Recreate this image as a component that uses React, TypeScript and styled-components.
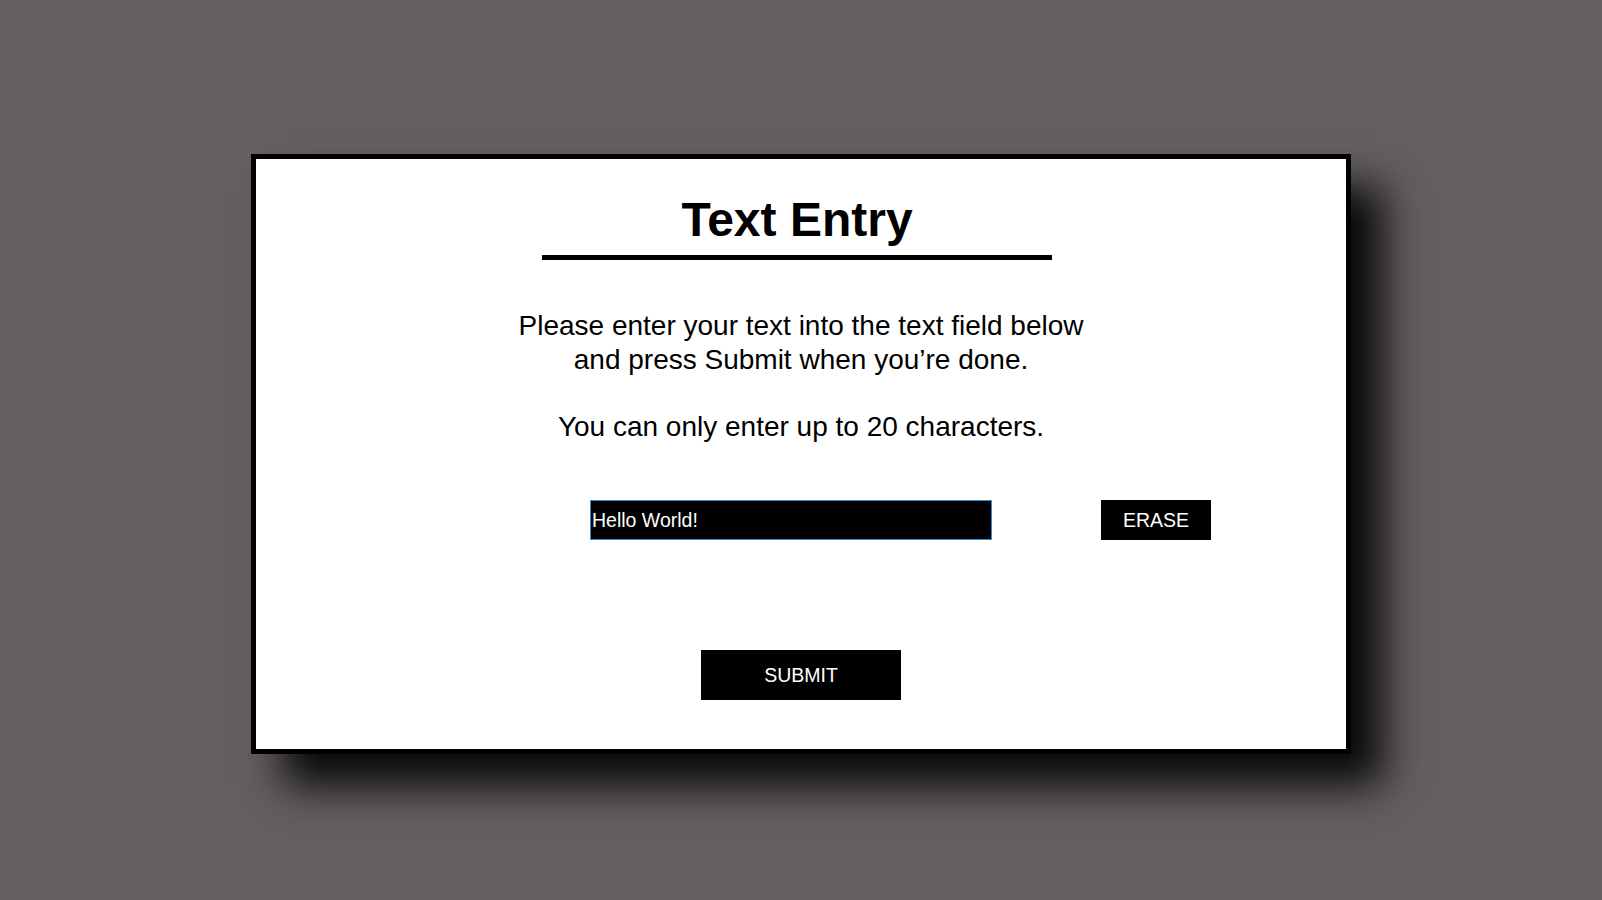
import { useState } from 'react';
import styled, { createGlobalStyle } from 'styled-components';

const GlobalStyle = createGlobalStyle`
  html,
  body {
    margin: 0;
    padding: 0;
    background-color: #65605f;
  }

  body {
    font-family: 'Liberation Sans', Arial, sans-serif;
  }
`;

const MAX_CHARS = 20;

export default function App() {
  const [text, setText] = useState('Hello World!');

  return (
    <>
      <GlobalStyle />
      <Page>
        <Card>
          <Heading>Text Entry</Heading>

          <Instructions>
            <p>
              Please enter your text into the text field below
              <br />
              and press Submit when you’re done.
            </p>
            <p>You can only enter up to {MAX_CHARS} characters.</p>
          </Instructions>

          <EntryRow>
            <TextField
              type='text'
              value={text}
              maxLength={MAX_CHARS}
              onChange={(e) => setText(e.target.value)}
            />
            <ActionButton $width={110} $height={40} onClick={() => setText('')}>
              ERASE
            </ActionButton>
          </EntryRow>

          <SubmitRow>
            <ActionButton $width={200} $height={50}>
              SUBMIT
            </ActionButton>
          </SubmitRow>
        </Card>
      </Page>
    </>
  );
}

const Page = styled.div`
  width: 1602px;
  height: 900px;
  padding-top: 154px;
  box-sizing: border-box;
  display: flex;
  justify-content: center;
  overflow: hidden;
`;

const Card = styled.div`
  width: 1100px;
  height: 600px;
  box-sizing: border-box;
  padding-top: 33px;
  display: flex;
  flex-direction: column;
  align-items: center;
  background-color: #ffffff;
  border: 5px solid #000000;
  box-shadow: 32px 32px 40px rgba(0, 0, 0, 0.92);
`;

const Heading = styled.h1`
  width: 510px;
  margin: 0 8px 0 0;
  padding-bottom: 7px;
  border-bottom: 5px solid #000000;
  color: #000000;
  font-size: 48px;
  font-weight: 700;
  line-height: 56px;
  text-align: center;
`;

const Instructions = styled.div`
  margin-top: 49px;
  display: flex;
  flex-direction: column;
  gap: 33px;
  color: #000000;
  font-size: 28px;
  line-height: 34px;
  text-align: center;

  p {
    margin: 0;
  }
`;

const EntryRow = styled.div`
  align-self: stretch;
  margin-top: 56px;
  padding-left: 334px;
  display: flex;
  align-items: center;
  gap: 109px;
`;

const TextField = styled.input`
  width: 402px;
  height: 40px;
  box-sizing: border-box;
  margin: 0;
  padding: 0 1px;
  border: 1px solid #2f8fd0;
  background-color: #000000;
  color: #ffffff;
  font-family: 'Liberation Sans', Arial, sans-serif;
  font-size: 19.5px;
  outline: none;
`;

const SubmitRow = styled.div`
  margin-top: 110px;
  display: flex;
  justify-content: center;
`;

const ActionButton = styled.button<{ $width: number; $height: number }>`
  width: ${({ $width }) => $width}px;
  height: ${({ $height }) => $height}px;
  margin: 0;
  padding: 0;
  border: none;
  background-color: #000000;
  color: #ffffff;
  font-family: 'Liberation Sans', Arial, sans-serif;
  font-size: 19.5px;
  cursor: pointer;
`;
